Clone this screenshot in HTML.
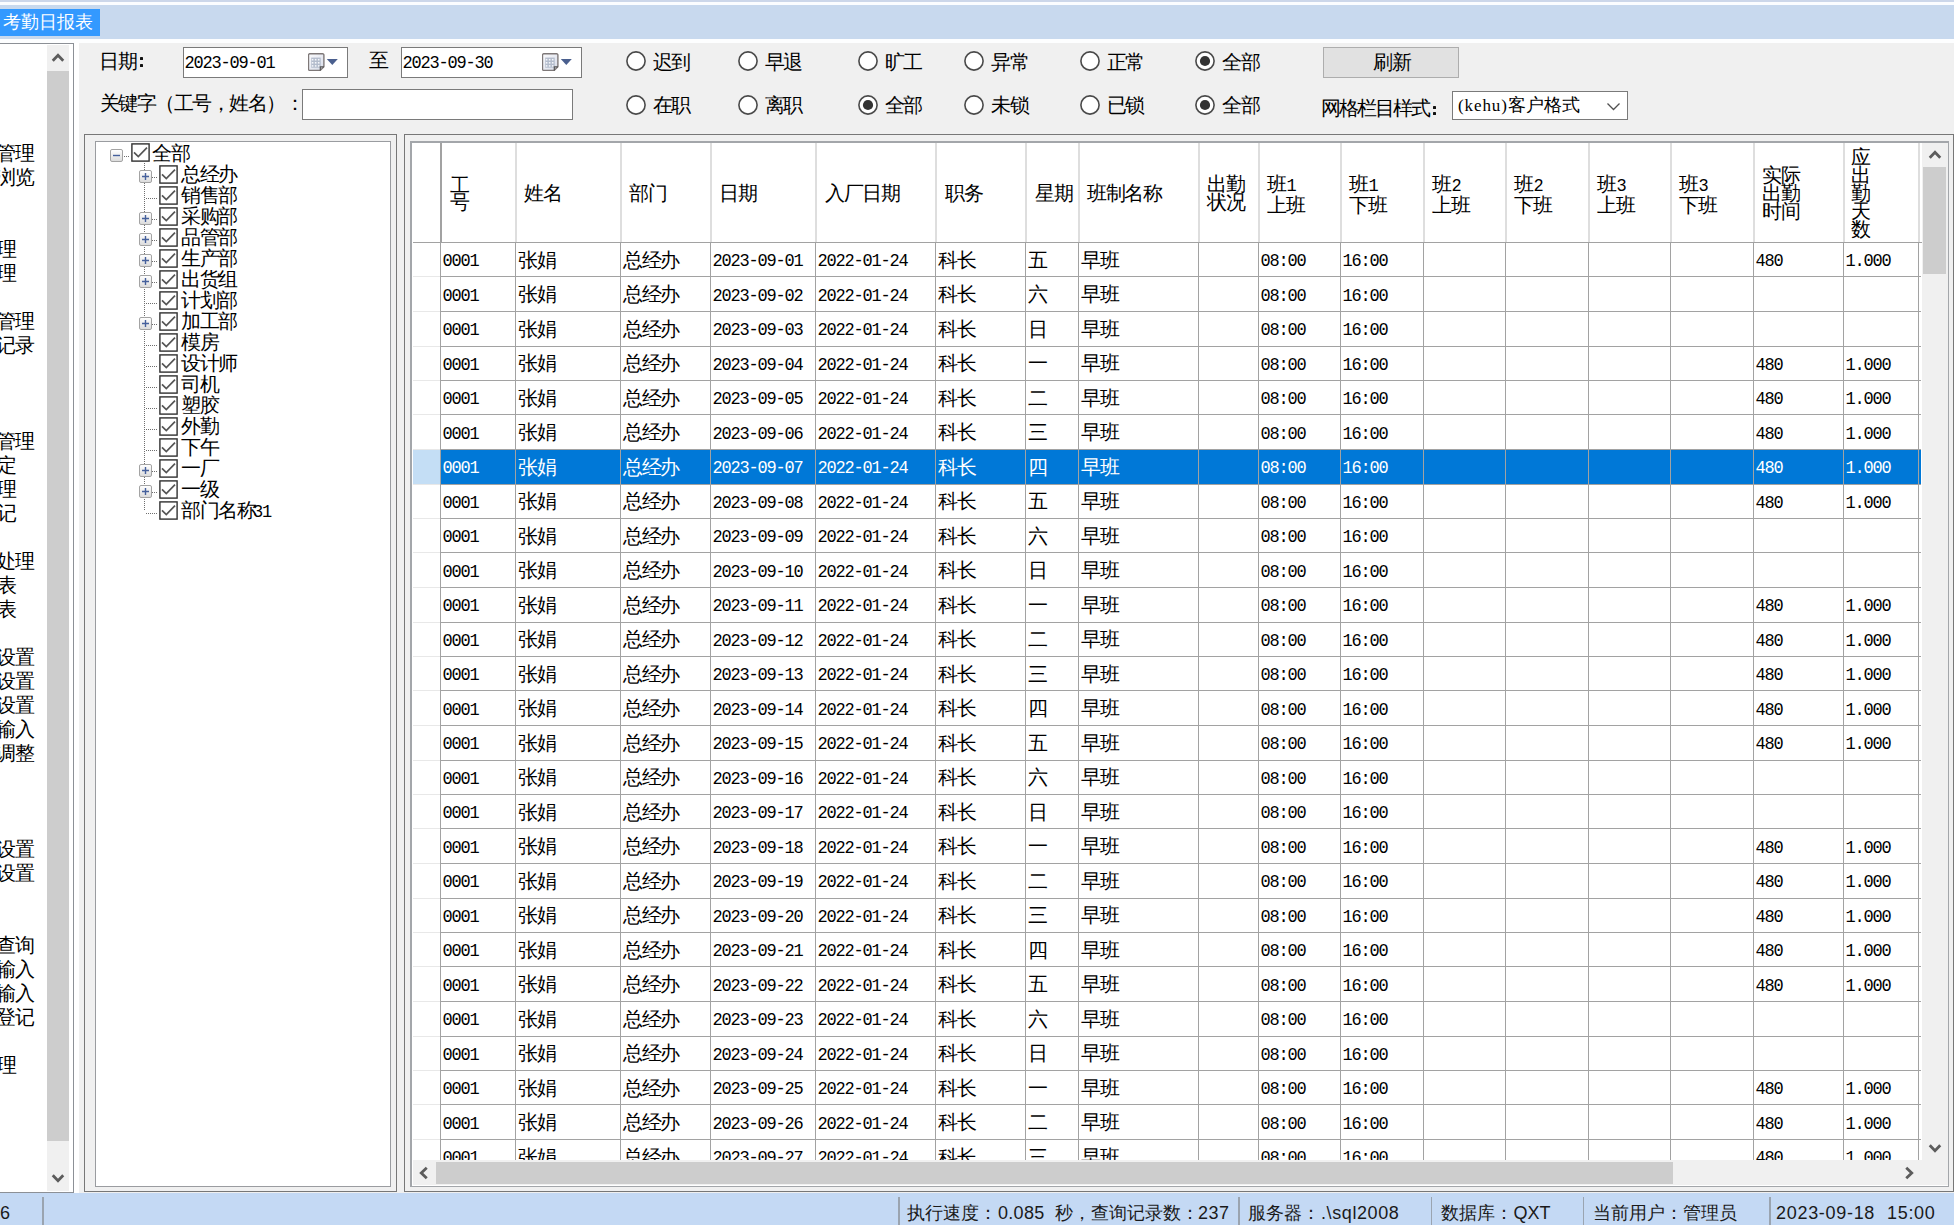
<!DOCTYPE html><html><head><meta charset="utf-8"><title>考勤日报表</title><style>
*{margin:0;padding:0;box-sizing:border-box}
html,body{width:1954px;height:1225px;overflow:hidden}
body{position:relative;background:#f0f0f0;font-family:"Liberation Sans",sans-serif;font-size:19.5px;letter-spacing:-1.5px;color:#000}
div,span{position:absolute;white-space:nowrap}
.t{line-height:20px;font-size:19.5px;letter-spacing:-1.5px}
.y{font-size:18px;letter-spacing:0}
.m{font-family:"Liberation Mono",monospace;font-size:17px;letter-spacing:-1.2px;transform:scaleY(1.1)}
.rad{width:20px;height:20px;border:1.7px solid #4a4a4a;border-radius:50%;background:#fff}
.rad.on::after{content:"";position:absolute;left:3.5px;top:3.5px;width:10px;height:10px;border-radius:50%;background:#333}
.cb{width:19px;height:19px;border:1.8px solid #303030;background:#fff}
.ex{width:13px;height:13px;border:1px solid #a3a3a3;border-radius:2px;background:linear-gradient(#fff,#dcdcdc)}
.dv{width:1px;background:repeating-linear-gradient(#6e6e6e 0 1px,transparent 1px 2px)}
.dh{height:1px;background:repeating-linear-gradient(90deg,#6e6e6e 0 1px,transparent 1px 2px)}
.vl{width:1.4px;background:#a2a2a2}
.hl{height:1.4px;background:#a2a2a2}
</style></head><body>
<div style="left:0;top:0;width:1954px;height:2px;background:#ccd7ea"></div>
<div style="left:0;top:2px;width:1954px;height:3px;background:#fbfdff"></div>
<div style="left:0;top:5px;width:1954px;height:34px;background:#c8d9ee"></div>
<div style="left:0;top:39px;width:1954px;height:4px;background:#fdfeff"></div>
<div style="left:0;top:9px;width:100px;height:27px;background:#3399ff"></div>
<div class="t y" style="left:3px;top:12px;color:#fff">考勤日报表</div>
<div style="left:0;top:43px;width:74px;height:1150px;background:#fff;border:1.5px solid #8c9096;border-left:0"></div>
<div style="left:74px;top:43px;width:5px;height:1150px;background:#fff"></div>
<div style="left:47px;top:44.5px;width:22px;height:1146px;background:#f0f0f0"></div>
<div style="left:47px;top:71px;width:22px;height:1070px;background:#cdcdcd"></div>
<svg style="position:absolute;left:47.5px;top:48px" width="20" height="20" viewBox="-10 -10 20 20"><polyline points="-5.25,2.75 0,-2.75 5.25,2.75" fill="none" stroke="#5c5c5c" stroke-width="2.8" stroke-linejoin="miter"/></svg>
<svg style="position:absolute;left:47.5px;top:1167.5px" width="20" height="20" viewBox="-10 -10 20 20"><polyline points="-5.25,-2.75 0,2.75 5.25,-2.75" fill="none" stroke="#5c5c5c" stroke-width="2.8" stroke-linejoin="miter"/></svg>
<div style="left:0;top:44px;width:46px;height:1146px;overflow:hidden">
<span class="t" style="right:13px;top:99px">考勤管理</span>
<span class="t" style="right:13px;top:123px">考勤浏览</span>
<span class="t" style="right:31px;top:195px">考勤理</span>
<span class="t" style="right:31px;top:219px">考勤理</span>
<span class="t" style="right:13px;top:267px">考勤管理</span>
<span class="t" style="right:13px;top:291px">考勤记录</span>
<span class="t" style="right:13px;top:387px">考勤管理</span>
<span class="t" style="right:31px;top:411px">考勤定</span>
<span class="t" style="right:31px;top:435px">考勤理</span>
<span class="t" style="right:31px;top:459px">考勤记</span>
<span class="t" style="right:13px;top:507px">考勤处理</span>
<span class="t" style="right:31px;top:531px">考勤表</span>
<span class="t" style="right:31px;top:555px">考勤表</span>
<span class="t" style="right:13px;top:603px">考勤设置</span>
<span class="t" style="right:13px;top:627px">考勤设置</span>
<span class="t" style="right:13px;top:651px">考勤设置</span>
<span class="t" style="right:13px;top:675px">考勤输入</span>
<span class="t" style="right:13px;top:699px">考勤调整</span>
<span class="t" style="right:13px;top:795px">考勤设置</span>
<span class="t" style="right:13px;top:819px">考勤设置</span>
<span class="t" style="right:13px;top:891px">考勤查询</span>
<span class="t" style="right:13px;top:915px">考勤输入</span>
<span class="t" style="right:13px;top:939px">考勤输入</span>
<span class="t" style="right:13px;top:963px">考勤登记</span>
<span class="t" style="right:31px;top:1011px">考勤理</span>
</div>
<div class="t" style="left:99px;top:51px;">日期</div>
<div style="left:140px;top:57px;width:3.2px;height:3.2px;background:#111;border-radius:0.6px"></div>
<div style="left:140px;top:64px;width:3.2px;height:3.2px;background:#111;border-radius:0.6px"></div>
<div style="left:183px;top:47px;width:165px;height:31px;background:#fff;border:1px solid #7a7a7a"></div>
<div class="t m" style="left:184.5px;top:54.0px">2023-09-01</div>
<svg style="position:absolute;left:308px;top:52px" width="18" height="20" viewBox="0 0 18 20"><defs><linearGradient id="cg" x1="0" y1="0" x2="1" y2="1"><stop offset="0" stop-color="#fbfbfd"/><stop offset="1" stop-color="#d6dbe8"/></linearGradient></defs><path d="M1.7,1.8 h13 a1.2,1.2 0 0 1 1.2,1.2 v11.8 l-3.6,3.6 h-10.6 a1.2,1.2 0 0 1 -1.2,-1.2 v-14.2 a1.2,1.2 0 0 1 1.2,-1.2z" fill="url(#cg)" stroke="#7e7878" stroke-width="1.4"/><rect x="3.2" y="5.6" width="9.5" height="10.1" fill="#b3bccc"/><rect x="3.8" y="6.9" width="1.6" height="1.6" fill="#f4f6fa"/><rect x="3.8" y="10.0" width="1.6" height="1.6" fill="#f4f6fa"/><rect x="3.8" y="13.1" width="1.6" height="1.6" fill="#f4f6fa"/><rect x="6.85" y="6.9" width="1.6" height="1.6" fill="#f4f6fa"/><rect x="6.85" y="10.0" width="1.6" height="1.6" fill="#f4f6fa"/><rect x="6.85" y="13.1" width="1.6" height="1.6" fill="#f4f6fa"/><rect x="9.899999999999999" y="6.9" width="1.6" height="1.6" fill="#f4f6fa"/><rect x="9.899999999999999" y="10.0" width="1.6" height="1.6" fill="#f4f6fa"/><rect x="9.899999999999999" y="13.1" width="1.6" height="1.6" fill="#f4f6fa"/><path d="M12.3,18.4 v-3.6 h3.6" fill="none" stroke="#555" stroke-width="1.2"/></svg>
<svg style="position:absolute;left:326px;top:58px" width="13" height="8"><polygon points="0.8,1 11.8,1 6.3,7" fill="#4a5f8e"/></svg>
<div class="t" style="left:369px;top:50px;">至</div>
<div style="left:401px;top:47px;width:181px;height:31px;background:#fff;border:1px solid #7a7a7a"></div>
<div class="t m" style="left:402.5px;top:54.0px">2023-09-30</div>
<svg style="position:absolute;left:542px;top:52px" width="18" height="20" viewBox="0 0 18 20"><defs><linearGradient id="cg" x1="0" y1="0" x2="1" y2="1"><stop offset="0" stop-color="#fbfbfd"/><stop offset="1" stop-color="#d6dbe8"/></linearGradient></defs><path d="M1.7,1.8 h13 a1.2,1.2 0 0 1 1.2,1.2 v11.8 l-3.6,3.6 h-10.6 a1.2,1.2 0 0 1 -1.2,-1.2 v-14.2 a1.2,1.2 0 0 1 1.2,-1.2z" fill="url(#cg)" stroke="#7e7878" stroke-width="1.4"/><rect x="3.2" y="5.6" width="9.5" height="10.1" fill="#b3bccc"/><rect x="3.8" y="6.9" width="1.6" height="1.6" fill="#f4f6fa"/><rect x="3.8" y="10.0" width="1.6" height="1.6" fill="#f4f6fa"/><rect x="3.8" y="13.1" width="1.6" height="1.6" fill="#f4f6fa"/><rect x="6.85" y="6.9" width="1.6" height="1.6" fill="#f4f6fa"/><rect x="6.85" y="10.0" width="1.6" height="1.6" fill="#f4f6fa"/><rect x="6.85" y="13.1" width="1.6" height="1.6" fill="#f4f6fa"/><rect x="9.899999999999999" y="6.9" width="1.6" height="1.6" fill="#f4f6fa"/><rect x="9.899999999999999" y="10.0" width="1.6" height="1.6" fill="#f4f6fa"/><rect x="9.899999999999999" y="13.1" width="1.6" height="1.6" fill="#f4f6fa"/><path d="M12.3,18.4 v-3.6 h3.6" fill="none" stroke="#555" stroke-width="1.2"/></svg>
<svg style="position:absolute;left:560px;top:58px" width="13" height="8"><polygon points="0.8,1 11.8,1 6.3,7" fill="#4a5f8e"/></svg>
<div class="t" style="left:99.5px;top:92.5px;">关键字（工号，姓名）：</div>
<div style="left:302px;top:89px;width:271px;height:31px;background:#fff;border:1px solid #7a7a7a"></div>
<svg style="position:absolute;left:625.5px;top:51px" width="20" height="20"><circle cx="10" cy="10" r="9.1" fill="#fff" stroke="#4a4a4a" stroke-width="1.6"/></svg>
<div class="t" style="left:652.5px;top:52px;">迟到</div>
<svg style="position:absolute;left:625.5px;top:95px" width="20" height="20"><circle cx="10" cy="10" r="9.1" fill="#fff" stroke="#4a4a4a" stroke-width="1.6"/></svg>
<div class="t" style="left:652.5px;top:95px;">在职</div>
<svg style="position:absolute;left:737.7px;top:51px" width="20" height="20"><circle cx="10" cy="10" r="9.1" fill="#fff" stroke="#4a4a4a" stroke-width="1.6"/></svg>
<div class="t" style="left:764.7px;top:52px;">早退</div>
<svg style="position:absolute;left:737.7px;top:95px" width="20" height="20"><circle cx="10" cy="10" r="9.1" fill="#fff" stroke="#4a4a4a" stroke-width="1.6"/></svg>
<div class="t" style="left:764.7px;top:95px;">离职</div>
<svg style="position:absolute;left:857.6px;top:51px" width="20" height="20"><circle cx="10" cy="10" r="9.1" fill="#fff" stroke="#4a4a4a" stroke-width="1.6"/></svg>
<div class="t" style="left:884.6px;top:52px;">旷工</div>
<svg style="position:absolute;left:857.6px;top:95px" width="20" height="20"><circle cx="10" cy="10" r="9.1" fill="#fff" stroke="#4a4a4a" stroke-width="1.6"/><circle cx="10" cy="10" r="5.1" fill="#333"/></svg>
<div class="t" style="left:884.6px;top:95px;">全部</div>
<svg style="position:absolute;left:964.3px;top:51px" width="20" height="20"><circle cx="10" cy="10" r="9.1" fill="#fff" stroke="#4a4a4a" stroke-width="1.6"/></svg>
<div class="t" style="left:991.3px;top:52px;">异常</div>
<svg style="position:absolute;left:964.3px;top:95px" width="20" height="20"><circle cx="10" cy="10" r="9.1" fill="#fff" stroke="#4a4a4a" stroke-width="1.6"/></svg>
<div class="t" style="left:991.3px;top:95px;">未锁</div>
<svg style="position:absolute;left:1079.9px;top:51px" width="20" height="20"><circle cx="10" cy="10" r="9.1" fill="#fff" stroke="#4a4a4a" stroke-width="1.6"/></svg>
<div class="t" style="left:1106.9px;top:52px;">正常</div>
<svg style="position:absolute;left:1079.9px;top:95px" width="20" height="20"><circle cx="10" cy="10" r="9.1" fill="#fff" stroke="#4a4a4a" stroke-width="1.6"/></svg>
<div class="t" style="left:1106.9px;top:95px;">已锁</div>
<svg style="position:absolute;left:1195.4px;top:51px" width="20" height="20"><circle cx="10" cy="10" r="9.1" fill="#fff" stroke="#4a4a4a" stroke-width="1.6"/><circle cx="10" cy="10" r="5.1" fill="#333"/></svg>
<div class="t" style="left:1222.4px;top:52px;">全部</div>
<svg style="position:absolute;left:1195.4px;top:95px" width="20" height="20"><circle cx="10" cy="10" r="9.1" fill="#fff" stroke="#4a4a4a" stroke-width="1.6"/><circle cx="10" cy="10" r="5.1" fill="#333"/></svg>
<div class="t" style="left:1222.4px;top:95px;">全部</div>
<div style="left:1323px;top:47px;width:136px;height:31px;background:#e1e1e1;border:1px solid #adadad"></div>
<div class="t" style="left:1373px;top:52px;">刷新</div>
<div class="t" style="left:1320.5px;top:97.5px;letter-spacing:-1.9px">网格栏目样式</div>
<div style="left:1432.5px;top:106px;width:3.2px;height:3.2px;background:#111;border-radius:0.6px"></div>
<div style="left:1432.5px;top:112px;width:3.2px;height:3.2px;background:#111;border-radius:0.6px"></div>
<div style="left:1452px;top:91px;width:176px;height:29px;background:#fff;border:1px solid #7a7a7a"></div>
<div class="t" style="left:1458px;top:95px;font-family:'Liberation Serif',serif;font-size:17px;letter-spacing:0.9px">(kehu)<span style="position:static;font-family:'Liberation Sans',sans-serif;font-size:18px;letter-spacing:0">客户格式</span></div>
<svg style="position:absolute;left:1606px;top:102px" width="16" height="10"><polyline points="1.5,1.5 7.5,7.5 13.5,1.5" fill="none" stroke="#505050" stroke-width="1.3"/></svg>
<div style="left:84px;top:134px;width:313px;height:1058px;border:1.5px solid #777"></div>
<div style="left:95px;top:141px;width:296px;height:1046px;background:#fff;border:1.5px solid #9a9ca0"></div>
<div class="ex" style="left:110px;top:149px"></div>
<svg style="position:absolute;left:110px;top:149px" width="13" height="13"><path d="M3,6.5 h7" stroke="#45609c" stroke-width="1.4"/></svg>
<div class="dh" style="left:124px;top:155.5px;width:6px"></div>
<svg style="position:absolute;left:131px;top:143px" width="19" height="19"><rect x="0.9" y="0.9" width="17.2" height="17.2" fill="#fff" stroke="#303030" stroke-width="1.4"/><polyline points="3,9.3 7.3,13.6 16,4.6" fill="none" stroke="#555" stroke-width="1.7"/></svg>
<div class="t" style="left:152px;top:143px;line-height:20px">全部</div>
<div class="dv" style="left:144px;top:163px;height:346.6px"></div>
<div class="ex" style="left:138.5px;top:170.1px"></div>
<svg style="position:absolute;left:138.5px;top:170.1px" width="13" height="13"><path d="M3,6.5 h7 M6.5,3 v7" stroke="#45609c" stroke-width="1.4"/></svg>
<div class="dh" style="left:152px;top:176.6px;width:6px"></div>
<svg style="position:absolute;left:158.8px;top:164.6px" width="19" height="19"><rect x="0.9" y="0.9" width="17.2" height="17.2" fill="#fff" stroke="#303030" stroke-width="1.4"/><polyline points="3,9.3 7.3,13.6 16,4.6" fill="none" stroke="#555" stroke-width="1.7"/></svg>
<div class="t" style="left:181px;top:164.1px">总经办</div>
<div class="dh" style="left:146px;top:197.6px;width:12px"></div>
<svg style="position:absolute;left:158.8px;top:185.6px" width="19" height="19"><rect x="0.9" y="0.9" width="17.2" height="17.2" fill="#fff" stroke="#303030" stroke-width="1.4"/><polyline points="3,9.3 7.3,13.6 16,4.6" fill="none" stroke="#555" stroke-width="1.7"/></svg>
<div class="t" style="left:181px;top:185.1px">销售部</div>
<div class="ex" style="left:138.5px;top:212.1px"></div>
<svg style="position:absolute;left:138.5px;top:212.1px" width="13" height="13"><path d="M3,6.5 h7 M6.5,3 v7" stroke="#45609c" stroke-width="1.4"/></svg>
<div class="dh" style="left:152px;top:218.6px;width:6px"></div>
<svg style="position:absolute;left:158.8px;top:206.6px" width="19" height="19"><rect x="0.9" y="0.9" width="17.2" height="17.2" fill="#fff" stroke="#303030" stroke-width="1.4"/><polyline points="3,9.3 7.3,13.6 16,4.6" fill="none" stroke="#555" stroke-width="1.7"/></svg>
<div class="t" style="left:181px;top:206.1px">采购部</div>
<div class="ex" style="left:138.5px;top:233.1px"></div>
<svg style="position:absolute;left:138.5px;top:233.1px" width="13" height="13"><path d="M3,6.5 h7 M6.5,3 v7" stroke="#45609c" stroke-width="1.4"/></svg>
<div class="dh" style="left:152px;top:239.6px;width:6px"></div>
<svg style="position:absolute;left:158.8px;top:227.6px" width="19" height="19"><rect x="0.9" y="0.9" width="17.2" height="17.2" fill="#fff" stroke="#303030" stroke-width="1.4"/><polyline points="3,9.3 7.3,13.6 16,4.6" fill="none" stroke="#555" stroke-width="1.7"/></svg>
<div class="t" style="left:181px;top:227.1px">品管部</div>
<div class="ex" style="left:138.5px;top:254.1px"></div>
<svg style="position:absolute;left:138.5px;top:254.1px" width="13" height="13"><path d="M3,6.5 h7 M6.5,3 v7" stroke="#45609c" stroke-width="1.4"/></svg>
<div class="dh" style="left:152px;top:260.6px;width:6px"></div>
<svg style="position:absolute;left:158.8px;top:248.6px" width="19" height="19"><rect x="0.9" y="0.9" width="17.2" height="17.2" fill="#fff" stroke="#303030" stroke-width="1.4"/><polyline points="3,9.3 7.3,13.6 16,4.6" fill="none" stroke="#555" stroke-width="1.7"/></svg>
<div class="t" style="left:181px;top:248.1px">生产部</div>
<div class="ex" style="left:138.5px;top:275.1px"></div>
<svg style="position:absolute;left:138.5px;top:275.1px" width="13" height="13"><path d="M3,6.5 h7 M6.5,3 v7" stroke="#45609c" stroke-width="1.4"/></svg>
<div class="dh" style="left:152px;top:281.6px;width:6px"></div>
<svg style="position:absolute;left:158.8px;top:269.6px" width="19" height="19"><rect x="0.9" y="0.9" width="17.2" height="17.2" fill="#fff" stroke="#303030" stroke-width="1.4"/><polyline points="3,9.3 7.3,13.6 16,4.6" fill="none" stroke="#555" stroke-width="1.7"/></svg>
<div class="t" style="left:181px;top:269.1px">出货组</div>
<div class="dh" style="left:146px;top:302.6px;width:12px"></div>
<svg style="position:absolute;left:158.8px;top:290.6px" width="19" height="19"><rect x="0.9" y="0.9" width="17.2" height="17.2" fill="#fff" stroke="#303030" stroke-width="1.4"/><polyline points="3,9.3 7.3,13.6 16,4.6" fill="none" stroke="#555" stroke-width="1.7"/></svg>
<div class="t" style="left:181px;top:290.1px">计划部</div>
<div class="ex" style="left:138.5px;top:317.1px"></div>
<svg style="position:absolute;left:138.5px;top:317.1px" width="13" height="13"><path d="M3,6.5 h7 M6.5,3 v7" stroke="#45609c" stroke-width="1.4"/></svg>
<div class="dh" style="left:152px;top:323.6px;width:6px"></div>
<svg style="position:absolute;left:158.8px;top:311.6px" width="19" height="19"><rect x="0.9" y="0.9" width="17.2" height="17.2" fill="#fff" stroke="#303030" stroke-width="1.4"/><polyline points="3,9.3 7.3,13.6 16,4.6" fill="none" stroke="#555" stroke-width="1.7"/></svg>
<div class="t" style="left:181px;top:311.1px">加工部</div>
<div class="dh" style="left:146px;top:344.6px;width:12px"></div>
<svg style="position:absolute;left:158.8px;top:332.6px" width="19" height="19"><rect x="0.9" y="0.9" width="17.2" height="17.2" fill="#fff" stroke="#303030" stroke-width="1.4"/><polyline points="3,9.3 7.3,13.6 16,4.6" fill="none" stroke="#555" stroke-width="1.7"/></svg>
<div class="t" style="left:181px;top:332.1px">模房</div>
<div class="dh" style="left:146px;top:365.6px;width:12px"></div>
<svg style="position:absolute;left:158.8px;top:353.6px" width="19" height="19"><rect x="0.9" y="0.9" width="17.2" height="17.2" fill="#fff" stroke="#303030" stroke-width="1.4"/><polyline points="3,9.3 7.3,13.6 16,4.6" fill="none" stroke="#555" stroke-width="1.7"/></svg>
<div class="t" style="left:181px;top:353.1px">设计师</div>
<div class="dh" style="left:146px;top:386.6px;width:12px"></div>
<svg style="position:absolute;left:158.8px;top:374.6px" width="19" height="19"><rect x="0.9" y="0.9" width="17.2" height="17.2" fill="#fff" stroke="#303030" stroke-width="1.4"/><polyline points="3,9.3 7.3,13.6 16,4.6" fill="none" stroke="#555" stroke-width="1.7"/></svg>
<div class="t" style="left:181px;top:374.1px">司机</div>
<div class="dh" style="left:146px;top:407.6px;width:12px"></div>
<svg style="position:absolute;left:158.8px;top:395.6px" width="19" height="19"><rect x="0.9" y="0.9" width="17.2" height="17.2" fill="#fff" stroke="#303030" stroke-width="1.4"/><polyline points="3,9.3 7.3,13.6 16,4.6" fill="none" stroke="#555" stroke-width="1.7"/></svg>
<div class="t" style="left:181px;top:395.1px">塑胶</div>
<div class="dh" style="left:146px;top:428.6px;width:12px"></div>
<svg style="position:absolute;left:158.8px;top:416.6px" width="19" height="19"><rect x="0.9" y="0.9" width="17.2" height="17.2" fill="#fff" stroke="#303030" stroke-width="1.4"/><polyline points="3,9.3 7.3,13.6 16,4.6" fill="none" stroke="#555" stroke-width="1.7"/></svg>
<div class="t" style="left:181px;top:416.1px">外勤</div>
<div class="dh" style="left:146px;top:449.6px;width:12px"></div>
<svg style="position:absolute;left:158.8px;top:437.6px" width="19" height="19"><rect x="0.9" y="0.9" width="17.2" height="17.2" fill="#fff" stroke="#303030" stroke-width="1.4"/><polyline points="3,9.3 7.3,13.6 16,4.6" fill="none" stroke="#555" stroke-width="1.7"/></svg>
<div class="t" style="left:181px;top:437.1px">下午</div>
<div class="ex" style="left:138.5px;top:464.1px"></div>
<svg style="position:absolute;left:138.5px;top:464.1px" width="13" height="13"><path d="M3,6.5 h7 M6.5,3 v7" stroke="#45609c" stroke-width="1.4"/></svg>
<div class="dh" style="left:152px;top:470.6px;width:6px"></div>
<svg style="position:absolute;left:158.8px;top:458.6px" width="19" height="19"><rect x="0.9" y="0.9" width="17.2" height="17.2" fill="#fff" stroke="#303030" stroke-width="1.4"/><polyline points="3,9.3 7.3,13.6 16,4.6" fill="none" stroke="#555" stroke-width="1.7"/></svg>
<div class="t" style="left:181px;top:458.1px">一厂</div>
<div class="ex" style="left:138.5px;top:485.1px"></div>
<svg style="position:absolute;left:138.5px;top:485.1px" width="13" height="13"><path d="M3,6.5 h7 M6.5,3 v7" stroke="#45609c" stroke-width="1.4"/></svg>
<div class="dh" style="left:152px;top:491.6px;width:6px"></div>
<svg style="position:absolute;left:158.8px;top:479.6px" width="19" height="19"><rect x="0.9" y="0.9" width="17.2" height="17.2" fill="#fff" stroke="#303030" stroke-width="1.4"/><polyline points="3,9.3 7.3,13.6 16,4.6" fill="none" stroke="#555" stroke-width="1.7"/></svg>
<div class="t" style="left:181px;top:479.1px">一级</div>
<div class="dh" style="left:146px;top:512.6px;width:12px"></div>
<svg style="position:absolute;left:158.8px;top:500.6px" width="19" height="19"><rect x="0.9" y="0.9" width="17.2" height="17.2" fill="#fff" stroke="#303030" stroke-width="1.4"/><polyline points="3,9.3 7.3,13.6 16,4.6" fill="none" stroke="#555" stroke-width="1.7"/></svg>
<div class="t" style="left:181px;top:500.1px">部门名称<span style="position:static;display:inline-block;font-family:Liberation Mono,monospace;font-size:17px;letter-spacing:-1.2px;transform:scaleY(1.1);margin-left:-2px">31</span></div>
<div style="left:403.5px;top:134px;width:1550px;height:1058px;border:1.5px solid #777;background:#f0f0f0"></div>
<div style="left:410px;top:140.5px;width:1538.5px;height:1046.5px;border:2px solid #a3a6aa;border-right-width:1.5px;border-bottom-width:1.5px;background:#fff"></div>
<div style="left:412.5px;top:143px;width:1509px;height:1017px;overflow:hidden;background:#fff">
<div class="vl" style="left:27.3px;top:0;height:99px;background:#a2a2a2;width:1.8px"></div>
<div class="vl" style="left:102.3px;top:0;height:99px;background:#dedede;width:1.8px"></div>
<div class="vl" style="left:207.3px;top:0;height:99px;background:#dedede;width:1.8px"></div>
<div class="vl" style="left:297.3px;top:0;height:99px;background:#dedede;width:1.8px"></div>
<div class="vl" style="left:402.3px;top:0;height:99px;background:#dedede;width:1.8px"></div>
<div class="vl" style="left:522.3px;top:0;height:99px;background:#dedede;width:1.8px"></div>
<div class="vl" style="left:612.3px;top:0;height:99px;background:#dedede;width:1.8px"></div>
<div class="vl" style="left:665.3px;top:0;height:99px;background:#dedede;width:1.8px"></div>
<div class="vl" style="left:785.3px;top:0;height:99px;background:#dedede;width:1.8px"></div>
<div class="vl" style="left:845.3px;top:0;height:99px;background:#dedede;width:1.8px"></div>
<div class="vl" style="left:927.3px;top:0;height:99px;background:#dedede;width:1.8px"></div>
<div class="vl" style="left:1010.3px;top:0;height:99px;background:#dedede;width:1.8px"></div>
<div class="vl" style="left:1092.3px;top:0;height:99px;background:#dedede;width:1.8px"></div>
<div class="vl" style="left:1175.3px;top:0;height:99px;background:#dedede;width:1.8px"></div>
<div class="vl" style="left:1257.3px;top:0;height:99px;background:#dedede;width:1.8px"></div>
<div class="vl" style="left:1340.3px;top:0;height:99px;background:#dedede;width:1.8px"></div>
<div class="vl" style="left:1430.3px;top:0;height:99px;background:#dedede;width:1.8px"></div>
<div class="vl" style="left:1505.3px;top:0;height:99px;background:#dedede;width:1.8px"></div>
<div class="hl" style="left:0;top:99px;width:1509px"></div>
<div style="left:37.5px;top:33.5px;line-height:17px">工<br>号</div>
<div style="left:111.5px;top:40.0px;line-height:20px">姓名</div>
<div style="left:216.5px;top:40.0px;line-height:20px">部门</div>
<div style="left:306.5px;top:40.0px;line-height:20px">日期</div>
<div style="left:412.5px;top:40.0px;line-height:20px">入厂日期</div>
<div style="left:532.5px;top:40.0px;line-height:20px">职务</div>
<div style="left:622.5px;top:40.0px;line-height:20px">星期</div>
<div style="left:674.5px;top:40.0px;line-height:20px">班制名称</div>
<div style="left:794.5px;top:31.5px;line-height:18px">出勤<br>状况</div>
<div style="left:854.5px;top:31.5px;line-height:18.5px">班<span style="position:static;display:inline-block;font-family:'Liberation Mono',monospace;font-size:17px;letter-spacing:0;margin-left:1px;transform:scaleY(1.1)">1</span><br>上班</div>
<div style="left:936.5px;top:31.5px;line-height:18.5px">班<span style="position:static;display:inline-block;font-family:'Liberation Mono',monospace;font-size:17px;letter-spacing:0;margin-left:1px;transform:scaleY(1.1)">1</span><br>下班</div>
<div style="left:1019.5px;top:31.5px;line-height:18.5px">班<span style="position:static;display:inline-block;font-family:'Liberation Mono',monospace;font-size:17px;letter-spacing:0;margin-left:1px;transform:scaleY(1.1)">2</span><br>上班</div>
<div style="left:1101.5px;top:31.5px;line-height:18.5px">班<span style="position:static;display:inline-block;font-family:'Liberation Mono',monospace;font-size:17px;letter-spacing:0;margin-left:1px;transform:scaleY(1.1)">2</span><br>下班</div>
<div style="left:1184.5px;top:31.5px;line-height:18.5px">班<span style="position:static;display:inline-block;font-family:'Liberation Mono',monospace;font-size:17px;letter-spacing:0;margin-left:1px;transform:scaleY(1.1)">3</span><br>上班</div>
<div style="left:1266.5px;top:31.5px;line-height:18.5px">班<span style="position:static;display:inline-block;font-family:'Liberation Mono',monospace;font-size:17px;letter-spacing:0;margin-left:1px;transform:scaleY(1.1)">3</span><br>下班</div>
<div style="left:1349.5px;top:23.0px;line-height:18px">实际<br>出勤<br>时间</div>
<div style="left:1438.5px;top:5.0px;line-height:18px">应<br>出<br>勤<br>天<br>数</div>
<div class="hl" style="left:27.5px;top:133px;width:1481px"></div>
<div class="hl" style="left:0;top:133px;width:27.5px;background:#e8e8e8"></div>
<div class="t m" style="left:30.0px;top:109.05000000000001px;color:#000">0001</div>
<div class="t" style="left:105.5px;top:106.75px;color:#000">张娟</div>
<div class="t" style="left:210.5px;top:106.75px;color:#000">总经办</div>
<div class="t m" style="left:300.0px;top:109.05000000000001px;color:#000">2023-09-01</div>
<div class="t m" style="left:405.0px;top:109.05000000000001px;color:#000">2022-01-24</div>
<div class="t" style="left:525.5px;top:106.75px;color:#000">科长</div>
<div class="t" style="left:615.5px;top:106.75px;color:#000">五</div>
<div class="t" style="left:668.5px;top:106.75px;color:#000">早班</div>
<div class="t m" style="left:848.0px;top:109.05000000000001px;color:#000">08:00</div>
<div class="t m" style="left:930.0px;top:109.05000000000001px;color:#000">16:00</div>
<div class="t m" style="left:1343.0px;top:109.05000000000001px;color:#000">480</div>
<div class="t m" style="left:1433.0px;top:109.05000000000001px;color:#000">1.000</div>
<div class="hl" style="left:27.5px;top:168px;width:1481px"></div>
<div class="hl" style="left:0;top:168px;width:27.5px;background:#e8e8e8"></div>
<div class="t m" style="left:30.0px;top:143.55px;color:#000">0001</div>
<div class="t" style="left:105.5px;top:141.25px;color:#000">张娟</div>
<div class="t" style="left:210.5px;top:141.25px;color:#000">总经办</div>
<div class="t m" style="left:300.0px;top:143.55px;color:#000">2023-09-02</div>
<div class="t m" style="left:405.0px;top:143.55px;color:#000">2022-01-24</div>
<div class="t" style="left:525.5px;top:141.25px;color:#000">科长</div>
<div class="t" style="left:615.5px;top:141.25px;color:#000">六</div>
<div class="t" style="left:668.5px;top:141.25px;color:#000">早班</div>
<div class="t m" style="left:848.0px;top:143.55px;color:#000">08:00</div>
<div class="t m" style="left:930.0px;top:143.55px;color:#000">16:00</div>
<div class="hl" style="left:27.5px;top:203px;width:1481px"></div>
<div class="hl" style="left:0;top:203px;width:27.5px;background:#e8e8e8"></div>
<div class="t m" style="left:30.0px;top:178.05px;color:#000">0001</div>
<div class="t" style="left:105.5px;top:175.75px;color:#000">张娟</div>
<div class="t" style="left:210.5px;top:175.75px;color:#000">总经办</div>
<div class="t m" style="left:300.0px;top:178.05px;color:#000">2023-09-03</div>
<div class="t m" style="left:405.0px;top:178.05px;color:#000">2022-01-24</div>
<div class="t" style="left:525.5px;top:175.75px;color:#000">科长</div>
<div class="t" style="left:615.5px;top:175.75px;color:#000">日</div>
<div class="t" style="left:668.5px;top:175.75px;color:#000">早班</div>
<div class="t m" style="left:848.0px;top:178.05px;color:#000">08:00</div>
<div class="t m" style="left:930.0px;top:178.05px;color:#000">16:00</div>
<div class="hl" style="left:27.5px;top:237px;width:1481px"></div>
<div class="hl" style="left:0;top:237px;width:27.5px;background:#e8e8e8"></div>
<div class="t m" style="left:30.0px;top:212.55px;color:#000">0001</div>
<div class="t" style="left:105.5px;top:210.25px;color:#000">张娟</div>
<div class="t" style="left:210.5px;top:210.25px;color:#000">总经办</div>
<div class="t m" style="left:300.0px;top:212.55px;color:#000">2023-09-04</div>
<div class="t m" style="left:405.0px;top:212.55px;color:#000">2022-01-24</div>
<div class="t" style="left:525.5px;top:210.25px;color:#000">科长</div>
<div class="t" style="left:615.5px;top:210.25px;color:#000">一</div>
<div class="t" style="left:668.5px;top:210.25px;color:#000">早班</div>
<div class="t m" style="left:848.0px;top:212.55px;color:#000">08:00</div>
<div class="t m" style="left:930.0px;top:212.55px;color:#000">16:00</div>
<div class="t m" style="left:1343.0px;top:212.55px;color:#000">480</div>
<div class="t m" style="left:1433.0px;top:212.55px;color:#000">1.000</div>
<div class="hl" style="left:27.5px;top:271px;width:1481px"></div>
<div class="hl" style="left:0;top:271px;width:27.5px;background:#e8e8e8"></div>
<div class="t m" style="left:30.0px;top:247.05px;color:#000">0001</div>
<div class="t" style="left:105.5px;top:244.75px;color:#000">张娟</div>
<div class="t" style="left:210.5px;top:244.75px;color:#000">总经办</div>
<div class="t m" style="left:300.0px;top:247.05px;color:#000">2023-09-05</div>
<div class="t m" style="left:405.0px;top:247.05px;color:#000">2022-01-24</div>
<div class="t" style="left:525.5px;top:244.75px;color:#000">科长</div>
<div class="t" style="left:615.5px;top:244.75px;color:#000">二</div>
<div class="t" style="left:668.5px;top:244.75px;color:#000">早班</div>
<div class="t m" style="left:848.0px;top:247.05px;color:#000">08:00</div>
<div class="t m" style="left:930.0px;top:247.05px;color:#000">16:00</div>
<div class="t m" style="left:1343.0px;top:247.05px;color:#000">480</div>
<div class="t m" style="left:1433.0px;top:247.05px;color:#000">1.000</div>
<div class="hl" style="left:27.5px;top:306px;width:1481px"></div>
<div class="hl" style="left:0;top:306px;width:27.5px;background:#e8e8e8"></div>
<div class="t m" style="left:30.0px;top:281.55px;color:#000">0001</div>
<div class="t" style="left:105.5px;top:279.25px;color:#000">张娟</div>
<div class="t" style="left:210.5px;top:279.25px;color:#000">总经办</div>
<div class="t m" style="left:300.0px;top:281.55px;color:#000">2023-09-06</div>
<div class="t m" style="left:405.0px;top:281.55px;color:#000">2022-01-24</div>
<div class="t" style="left:525.5px;top:279.25px;color:#000">科长</div>
<div class="t" style="left:615.5px;top:279.25px;color:#000">三</div>
<div class="t" style="left:668.5px;top:279.25px;color:#000">早班</div>
<div class="t m" style="left:848.0px;top:281.55px;color:#000">08:00</div>
<div class="t m" style="left:930.0px;top:281.55px;color:#000">16:00</div>
<div class="t m" style="left:1343.0px;top:281.55px;color:#000">480</div>
<div class="t m" style="left:1433.0px;top:281.55px;color:#000">1.000</div>
<div style="left:27.5px;top:306.5px;width:1481px;height:34.5px;background:#0078d7"></div>
<div style="left:0;top:306.5px;width:27.5px;height:34.5px;background:#c4def5"></div>
<div class="hl" style="left:27.5px;top:341px;width:1481px"></div>
<div class="hl" style="left:0;top:341px;width:27.5px;background:#e8e8e8"></div>
<div class="t m" style="left:30.0px;top:316.05px;color:#fff">0001</div>
<div class="t" style="left:105.5px;top:313.75px;color:#fff">张娟</div>
<div class="t" style="left:210.5px;top:313.75px;color:#fff">总经办</div>
<div class="t m" style="left:300.0px;top:316.05px;color:#fff">2023-09-07</div>
<div class="t m" style="left:405.0px;top:316.05px;color:#fff">2022-01-24</div>
<div class="t" style="left:525.5px;top:313.75px;color:#fff">科长</div>
<div class="t" style="left:615.5px;top:313.75px;color:#fff">四</div>
<div class="t" style="left:668.5px;top:313.75px;color:#fff">早班</div>
<div class="t m" style="left:848.0px;top:316.05px;color:#fff">08:00</div>
<div class="t m" style="left:930.0px;top:316.05px;color:#fff">16:00</div>
<div class="t m" style="left:1343.0px;top:316.05px;color:#fff">480</div>
<div class="t m" style="left:1433.0px;top:316.05px;color:#fff">1.000</div>
<div class="hl" style="left:27.5px;top:375px;width:1481px"></div>
<div class="hl" style="left:0;top:375px;width:27.5px;background:#e8e8e8"></div>
<div class="t m" style="left:30.0px;top:350.55px;color:#000">0001</div>
<div class="t" style="left:105.5px;top:348.25px;color:#000">张娟</div>
<div class="t" style="left:210.5px;top:348.25px;color:#000">总经办</div>
<div class="t m" style="left:300.0px;top:350.55px;color:#000">2023-09-08</div>
<div class="t m" style="left:405.0px;top:350.55px;color:#000">2022-01-24</div>
<div class="t" style="left:525.5px;top:348.25px;color:#000">科长</div>
<div class="t" style="left:615.5px;top:348.25px;color:#000">五</div>
<div class="t" style="left:668.5px;top:348.25px;color:#000">早班</div>
<div class="t m" style="left:848.0px;top:350.55px;color:#000">08:00</div>
<div class="t m" style="left:930.0px;top:350.55px;color:#000">16:00</div>
<div class="t m" style="left:1343.0px;top:350.55px;color:#000">480</div>
<div class="t m" style="left:1433.0px;top:350.55px;color:#000">1.000</div>
<div class="hl" style="left:27.5px;top:409px;width:1481px"></div>
<div class="hl" style="left:0;top:409px;width:27.5px;background:#e8e8e8"></div>
<div class="t m" style="left:30.0px;top:385.04999999999995px;color:#000">0001</div>
<div class="t" style="left:105.5px;top:382.75px;color:#000">张娟</div>
<div class="t" style="left:210.5px;top:382.75px;color:#000">总经办</div>
<div class="t m" style="left:300.0px;top:385.04999999999995px;color:#000">2023-09-09</div>
<div class="t m" style="left:405.0px;top:385.04999999999995px;color:#000">2022-01-24</div>
<div class="t" style="left:525.5px;top:382.75px;color:#000">科长</div>
<div class="t" style="left:615.5px;top:382.75px;color:#000">六</div>
<div class="t" style="left:668.5px;top:382.75px;color:#000">早班</div>
<div class="t m" style="left:848.0px;top:385.04999999999995px;color:#000">08:00</div>
<div class="t m" style="left:930.0px;top:385.04999999999995px;color:#000">16:00</div>
<div class="hl" style="left:27.5px;top:444px;width:1481px"></div>
<div class="hl" style="left:0;top:444px;width:27.5px;background:#e8e8e8"></div>
<div class="t m" style="left:30.0px;top:419.54999999999995px;color:#000">0001</div>
<div class="t" style="left:105.5px;top:417.25px;color:#000">张娟</div>
<div class="t" style="left:210.5px;top:417.25px;color:#000">总经办</div>
<div class="t m" style="left:300.0px;top:419.54999999999995px;color:#000">2023-09-10</div>
<div class="t m" style="left:405.0px;top:419.54999999999995px;color:#000">2022-01-24</div>
<div class="t" style="left:525.5px;top:417.25px;color:#000">科长</div>
<div class="t" style="left:615.5px;top:417.25px;color:#000">日</div>
<div class="t" style="left:668.5px;top:417.25px;color:#000">早班</div>
<div class="t m" style="left:848.0px;top:419.54999999999995px;color:#000">08:00</div>
<div class="t m" style="left:930.0px;top:419.54999999999995px;color:#000">16:00</div>
<div class="hl" style="left:27.5px;top:479px;width:1481px"></div>
<div class="hl" style="left:0;top:479px;width:27.5px;background:#e8e8e8"></div>
<div class="t m" style="left:30.0px;top:454.04999999999995px;color:#000">0001</div>
<div class="t" style="left:105.5px;top:451.75px;color:#000">张娟</div>
<div class="t" style="left:210.5px;top:451.75px;color:#000">总经办</div>
<div class="t m" style="left:300.0px;top:454.04999999999995px;color:#000">2023-09-11</div>
<div class="t m" style="left:405.0px;top:454.04999999999995px;color:#000">2022-01-24</div>
<div class="t" style="left:525.5px;top:451.75px;color:#000">科长</div>
<div class="t" style="left:615.5px;top:451.75px;color:#000">一</div>
<div class="t" style="left:668.5px;top:451.75px;color:#000">早班</div>
<div class="t m" style="left:848.0px;top:454.04999999999995px;color:#000">08:00</div>
<div class="t m" style="left:930.0px;top:454.04999999999995px;color:#000">16:00</div>
<div class="t m" style="left:1343.0px;top:454.04999999999995px;color:#000">480</div>
<div class="t m" style="left:1433.0px;top:454.04999999999995px;color:#000">1.000</div>
<div class="hl" style="left:27.5px;top:513px;width:1481px"></div>
<div class="hl" style="left:0;top:513px;width:27.5px;background:#e8e8e8"></div>
<div class="t m" style="left:30.0px;top:488.54999999999995px;color:#000">0001</div>
<div class="t" style="left:105.5px;top:486.25px;color:#000">张娟</div>
<div class="t" style="left:210.5px;top:486.25px;color:#000">总经办</div>
<div class="t m" style="left:300.0px;top:488.54999999999995px;color:#000">2023-09-12</div>
<div class="t m" style="left:405.0px;top:488.54999999999995px;color:#000">2022-01-24</div>
<div class="t" style="left:525.5px;top:486.25px;color:#000">科长</div>
<div class="t" style="left:615.5px;top:486.25px;color:#000">二</div>
<div class="t" style="left:668.5px;top:486.25px;color:#000">早班</div>
<div class="t m" style="left:848.0px;top:488.54999999999995px;color:#000">08:00</div>
<div class="t m" style="left:930.0px;top:488.54999999999995px;color:#000">16:00</div>
<div class="t m" style="left:1343.0px;top:488.54999999999995px;color:#000">480</div>
<div class="t m" style="left:1433.0px;top:488.54999999999995px;color:#000">1.000</div>
<div class="hl" style="left:27.5px;top:547px;width:1481px"></div>
<div class="hl" style="left:0;top:547px;width:27.5px;background:#e8e8e8"></div>
<div class="t m" style="left:30.0px;top:523.05px;color:#000">0001</div>
<div class="t" style="left:105.5px;top:520.75px;color:#000">张娟</div>
<div class="t" style="left:210.5px;top:520.75px;color:#000">总经办</div>
<div class="t m" style="left:300.0px;top:523.05px;color:#000">2023-09-13</div>
<div class="t m" style="left:405.0px;top:523.05px;color:#000">2022-01-24</div>
<div class="t" style="left:525.5px;top:520.75px;color:#000">科长</div>
<div class="t" style="left:615.5px;top:520.75px;color:#000">三</div>
<div class="t" style="left:668.5px;top:520.75px;color:#000">早班</div>
<div class="t m" style="left:848.0px;top:523.05px;color:#000">08:00</div>
<div class="t m" style="left:930.0px;top:523.05px;color:#000">16:00</div>
<div class="t m" style="left:1343.0px;top:523.05px;color:#000">480</div>
<div class="t m" style="left:1433.0px;top:523.05px;color:#000">1.000</div>
<div class="hl" style="left:27.5px;top:582px;width:1481px"></div>
<div class="hl" style="left:0;top:582px;width:27.5px;background:#e8e8e8"></div>
<div class="t m" style="left:30.0px;top:557.55px;color:#000">0001</div>
<div class="t" style="left:105.5px;top:555.25px;color:#000">张娟</div>
<div class="t" style="left:210.5px;top:555.25px;color:#000">总经办</div>
<div class="t m" style="left:300.0px;top:557.55px;color:#000">2023-09-14</div>
<div class="t m" style="left:405.0px;top:557.55px;color:#000">2022-01-24</div>
<div class="t" style="left:525.5px;top:555.25px;color:#000">科长</div>
<div class="t" style="left:615.5px;top:555.25px;color:#000">四</div>
<div class="t" style="left:668.5px;top:555.25px;color:#000">早班</div>
<div class="t m" style="left:848.0px;top:557.55px;color:#000">08:00</div>
<div class="t m" style="left:930.0px;top:557.55px;color:#000">16:00</div>
<div class="t m" style="left:1343.0px;top:557.55px;color:#000">480</div>
<div class="t m" style="left:1433.0px;top:557.55px;color:#000">1.000</div>
<div class="hl" style="left:27.5px;top:617px;width:1481px"></div>
<div class="hl" style="left:0;top:617px;width:27.5px;background:#e8e8e8"></div>
<div class="t m" style="left:30.0px;top:592.05px;color:#000">0001</div>
<div class="t" style="left:105.5px;top:589.75px;color:#000">张娟</div>
<div class="t" style="left:210.5px;top:589.75px;color:#000">总经办</div>
<div class="t m" style="left:300.0px;top:592.05px;color:#000">2023-09-15</div>
<div class="t m" style="left:405.0px;top:592.05px;color:#000">2022-01-24</div>
<div class="t" style="left:525.5px;top:589.75px;color:#000">科长</div>
<div class="t" style="left:615.5px;top:589.75px;color:#000">五</div>
<div class="t" style="left:668.5px;top:589.75px;color:#000">早班</div>
<div class="t m" style="left:848.0px;top:592.05px;color:#000">08:00</div>
<div class="t m" style="left:930.0px;top:592.05px;color:#000">16:00</div>
<div class="t m" style="left:1343.0px;top:592.05px;color:#000">480</div>
<div class="t m" style="left:1433.0px;top:592.05px;color:#000">1.000</div>
<div class="hl" style="left:27.5px;top:651px;width:1481px"></div>
<div class="hl" style="left:0;top:651px;width:27.5px;background:#e8e8e8"></div>
<div class="t m" style="left:30.0px;top:626.55px;color:#000">0001</div>
<div class="t" style="left:105.5px;top:624.25px;color:#000">张娟</div>
<div class="t" style="left:210.5px;top:624.25px;color:#000">总经办</div>
<div class="t m" style="left:300.0px;top:626.55px;color:#000">2023-09-16</div>
<div class="t m" style="left:405.0px;top:626.55px;color:#000">2022-01-24</div>
<div class="t" style="left:525.5px;top:624.25px;color:#000">科长</div>
<div class="t" style="left:615.5px;top:624.25px;color:#000">六</div>
<div class="t" style="left:668.5px;top:624.25px;color:#000">早班</div>
<div class="t m" style="left:848.0px;top:626.55px;color:#000">08:00</div>
<div class="t m" style="left:930.0px;top:626.55px;color:#000">16:00</div>
<div class="hl" style="left:27.5px;top:685px;width:1481px"></div>
<div class="hl" style="left:0;top:685px;width:27.5px;background:#e8e8e8"></div>
<div class="t m" style="left:30.0px;top:661.05px;color:#000">0001</div>
<div class="t" style="left:105.5px;top:658.75px;color:#000">张娟</div>
<div class="t" style="left:210.5px;top:658.75px;color:#000">总经办</div>
<div class="t m" style="left:300.0px;top:661.05px;color:#000">2023-09-17</div>
<div class="t m" style="left:405.0px;top:661.05px;color:#000">2022-01-24</div>
<div class="t" style="left:525.5px;top:658.75px;color:#000">科长</div>
<div class="t" style="left:615.5px;top:658.75px;color:#000">日</div>
<div class="t" style="left:668.5px;top:658.75px;color:#000">早班</div>
<div class="t m" style="left:848.0px;top:661.05px;color:#000">08:00</div>
<div class="t m" style="left:930.0px;top:661.05px;color:#000">16:00</div>
<div class="hl" style="left:27.5px;top:720px;width:1481px"></div>
<div class="hl" style="left:0;top:720px;width:27.5px;background:#e8e8e8"></div>
<div class="t m" style="left:30.0px;top:695.55px;color:#000">0001</div>
<div class="t" style="left:105.5px;top:693.25px;color:#000">张娟</div>
<div class="t" style="left:210.5px;top:693.25px;color:#000">总经办</div>
<div class="t m" style="left:300.0px;top:695.55px;color:#000">2023-09-18</div>
<div class="t m" style="left:405.0px;top:695.55px;color:#000">2022-01-24</div>
<div class="t" style="left:525.5px;top:693.25px;color:#000">科长</div>
<div class="t" style="left:615.5px;top:693.25px;color:#000">一</div>
<div class="t" style="left:668.5px;top:693.25px;color:#000">早班</div>
<div class="t m" style="left:848.0px;top:695.55px;color:#000">08:00</div>
<div class="t m" style="left:930.0px;top:695.55px;color:#000">16:00</div>
<div class="t m" style="left:1343.0px;top:695.55px;color:#000">480</div>
<div class="t m" style="left:1433.0px;top:695.55px;color:#000">1.000</div>
<div class="hl" style="left:27.5px;top:755px;width:1481px"></div>
<div class="hl" style="left:0;top:755px;width:27.5px;background:#e8e8e8"></div>
<div class="t m" style="left:30.0px;top:730.05px;color:#000">0001</div>
<div class="t" style="left:105.5px;top:727.75px;color:#000">张娟</div>
<div class="t" style="left:210.5px;top:727.75px;color:#000">总经办</div>
<div class="t m" style="left:300.0px;top:730.05px;color:#000">2023-09-19</div>
<div class="t m" style="left:405.0px;top:730.05px;color:#000">2022-01-24</div>
<div class="t" style="left:525.5px;top:727.75px;color:#000">科长</div>
<div class="t" style="left:615.5px;top:727.75px;color:#000">二</div>
<div class="t" style="left:668.5px;top:727.75px;color:#000">早班</div>
<div class="t m" style="left:848.0px;top:730.05px;color:#000">08:00</div>
<div class="t m" style="left:930.0px;top:730.05px;color:#000">16:00</div>
<div class="t m" style="left:1343.0px;top:730.05px;color:#000">480</div>
<div class="t m" style="left:1433.0px;top:730.05px;color:#000">1.000</div>
<div class="hl" style="left:27.5px;top:789px;width:1481px"></div>
<div class="hl" style="left:0;top:789px;width:27.5px;background:#e8e8e8"></div>
<div class="t m" style="left:30.0px;top:764.55px;color:#000">0001</div>
<div class="t" style="left:105.5px;top:762.25px;color:#000">张娟</div>
<div class="t" style="left:210.5px;top:762.25px;color:#000">总经办</div>
<div class="t m" style="left:300.0px;top:764.55px;color:#000">2023-09-20</div>
<div class="t m" style="left:405.0px;top:764.55px;color:#000">2022-01-24</div>
<div class="t" style="left:525.5px;top:762.25px;color:#000">科长</div>
<div class="t" style="left:615.5px;top:762.25px;color:#000">三</div>
<div class="t" style="left:668.5px;top:762.25px;color:#000">早班</div>
<div class="t m" style="left:848.0px;top:764.55px;color:#000">08:00</div>
<div class="t m" style="left:930.0px;top:764.55px;color:#000">16:00</div>
<div class="t m" style="left:1343.0px;top:764.55px;color:#000">480</div>
<div class="t m" style="left:1433.0px;top:764.55px;color:#000">1.000</div>
<div class="hl" style="left:27.5px;top:823px;width:1481px"></div>
<div class="hl" style="left:0;top:823px;width:27.5px;background:#e8e8e8"></div>
<div class="t m" style="left:30.0px;top:799.05px;color:#000">0001</div>
<div class="t" style="left:105.5px;top:796.75px;color:#000">张娟</div>
<div class="t" style="left:210.5px;top:796.75px;color:#000">总经办</div>
<div class="t m" style="left:300.0px;top:799.05px;color:#000">2023-09-21</div>
<div class="t m" style="left:405.0px;top:799.05px;color:#000">2022-01-24</div>
<div class="t" style="left:525.5px;top:796.75px;color:#000">科长</div>
<div class="t" style="left:615.5px;top:796.75px;color:#000">四</div>
<div class="t" style="left:668.5px;top:796.75px;color:#000">早班</div>
<div class="t m" style="left:848.0px;top:799.05px;color:#000">08:00</div>
<div class="t m" style="left:930.0px;top:799.05px;color:#000">16:00</div>
<div class="t m" style="left:1343.0px;top:799.05px;color:#000">480</div>
<div class="t m" style="left:1433.0px;top:799.05px;color:#000">1.000</div>
<div class="hl" style="left:27.5px;top:858px;width:1481px"></div>
<div class="hl" style="left:0;top:858px;width:27.5px;background:#e8e8e8"></div>
<div class="t m" style="left:30.0px;top:833.55px;color:#000">0001</div>
<div class="t" style="left:105.5px;top:831.25px;color:#000">张娟</div>
<div class="t" style="left:210.5px;top:831.25px;color:#000">总经办</div>
<div class="t m" style="left:300.0px;top:833.55px;color:#000">2023-09-22</div>
<div class="t m" style="left:405.0px;top:833.55px;color:#000">2022-01-24</div>
<div class="t" style="left:525.5px;top:831.25px;color:#000">科长</div>
<div class="t" style="left:615.5px;top:831.25px;color:#000">五</div>
<div class="t" style="left:668.5px;top:831.25px;color:#000">早班</div>
<div class="t m" style="left:848.0px;top:833.55px;color:#000">08:00</div>
<div class="t m" style="left:930.0px;top:833.55px;color:#000">16:00</div>
<div class="t m" style="left:1343.0px;top:833.55px;color:#000">480</div>
<div class="t m" style="left:1433.0px;top:833.55px;color:#000">1.000</div>
<div class="hl" style="left:27.5px;top:893px;width:1481px"></div>
<div class="hl" style="left:0;top:893px;width:27.5px;background:#e8e8e8"></div>
<div class="t m" style="left:30.0px;top:868.05px;color:#000">0001</div>
<div class="t" style="left:105.5px;top:865.75px;color:#000">张娟</div>
<div class="t" style="left:210.5px;top:865.75px;color:#000">总经办</div>
<div class="t m" style="left:300.0px;top:868.05px;color:#000">2023-09-23</div>
<div class="t m" style="left:405.0px;top:868.05px;color:#000">2022-01-24</div>
<div class="t" style="left:525.5px;top:865.75px;color:#000">科长</div>
<div class="t" style="left:615.5px;top:865.75px;color:#000">六</div>
<div class="t" style="left:668.5px;top:865.75px;color:#000">早班</div>
<div class="t m" style="left:848.0px;top:868.05px;color:#000">08:00</div>
<div class="t m" style="left:930.0px;top:868.05px;color:#000">16:00</div>
<div class="hl" style="left:27.5px;top:927px;width:1481px"></div>
<div class="hl" style="left:0;top:927px;width:27.5px;background:#e8e8e8"></div>
<div class="t m" style="left:30.0px;top:902.55px;color:#000">0001</div>
<div class="t" style="left:105.5px;top:900.25px;color:#000">张娟</div>
<div class="t" style="left:210.5px;top:900.25px;color:#000">总经办</div>
<div class="t m" style="left:300.0px;top:902.55px;color:#000">2023-09-24</div>
<div class="t m" style="left:405.0px;top:902.55px;color:#000">2022-01-24</div>
<div class="t" style="left:525.5px;top:900.25px;color:#000">科长</div>
<div class="t" style="left:615.5px;top:900.25px;color:#000">日</div>
<div class="t" style="left:668.5px;top:900.25px;color:#000">早班</div>
<div class="t m" style="left:848.0px;top:902.55px;color:#000">08:00</div>
<div class="t m" style="left:930.0px;top:902.55px;color:#000">16:00</div>
<div class="hl" style="left:27.5px;top:961px;width:1481px"></div>
<div class="hl" style="left:0;top:961px;width:27.5px;background:#e8e8e8"></div>
<div class="t m" style="left:30.0px;top:937.05px;color:#000">0001</div>
<div class="t" style="left:105.5px;top:934.75px;color:#000">张娟</div>
<div class="t" style="left:210.5px;top:934.75px;color:#000">总经办</div>
<div class="t m" style="left:300.0px;top:937.05px;color:#000">2023-09-25</div>
<div class="t m" style="left:405.0px;top:937.05px;color:#000">2022-01-24</div>
<div class="t" style="left:525.5px;top:934.75px;color:#000">科长</div>
<div class="t" style="left:615.5px;top:934.75px;color:#000">一</div>
<div class="t" style="left:668.5px;top:934.75px;color:#000">早班</div>
<div class="t m" style="left:848.0px;top:937.05px;color:#000">08:00</div>
<div class="t m" style="left:930.0px;top:937.05px;color:#000">16:00</div>
<div class="t m" style="left:1343.0px;top:937.05px;color:#000">480</div>
<div class="t m" style="left:1433.0px;top:937.05px;color:#000">1.000</div>
<div class="hl" style="left:27.5px;top:996px;width:1481px"></div>
<div class="hl" style="left:0;top:996px;width:27.5px;background:#e8e8e8"></div>
<div class="t m" style="left:30.0px;top:971.55px;color:#000">0001</div>
<div class="t" style="left:105.5px;top:969.25px;color:#000">张娟</div>
<div class="t" style="left:210.5px;top:969.25px;color:#000">总经办</div>
<div class="t m" style="left:300.0px;top:971.55px;color:#000">2023-09-26</div>
<div class="t m" style="left:405.0px;top:971.55px;color:#000">2022-01-24</div>
<div class="t" style="left:525.5px;top:969.25px;color:#000">科长</div>
<div class="t" style="left:615.5px;top:969.25px;color:#000">二</div>
<div class="t" style="left:668.5px;top:969.25px;color:#000">早班</div>
<div class="t m" style="left:848.0px;top:971.55px;color:#000">08:00</div>
<div class="t m" style="left:930.0px;top:971.55px;color:#000">16:00</div>
<div class="t m" style="left:1343.0px;top:971.55px;color:#000">480</div>
<div class="t m" style="left:1433.0px;top:971.55px;color:#000">1.000</div>
<div class="hl" style="left:27.5px;top:1031px;width:1481px"></div>
<div class="hl" style="left:0;top:1031px;width:27.5px;background:#e8e8e8"></div>
<div class="t m" style="left:30.0px;top:1006.05px;color:#000">0001</div>
<div class="t" style="left:105.5px;top:1003.75px;color:#000">张娟</div>
<div class="t" style="left:210.5px;top:1003.75px;color:#000">总经办</div>
<div class="t m" style="left:300.0px;top:1006.05px;color:#000">2023-09-27</div>
<div class="t m" style="left:405.0px;top:1006.05px;color:#000">2022-01-24</div>
<div class="t" style="left:525.5px;top:1003.75px;color:#000">科长</div>
<div class="t" style="left:615.5px;top:1003.75px;color:#000">三</div>
<div class="t" style="left:668.5px;top:1003.75px;color:#000">早班</div>
<div class="t m" style="left:848.0px;top:1006.05px;color:#000">08:00</div>
<div class="t m" style="left:930.0px;top:1006.05px;color:#000">16:00</div>
<div class="t m" style="left:1343.0px;top:1006.05px;color:#000">480</div>
<div class="t m" style="left:1433.0px;top:1006.05px;color:#000">1.000</div>
<div class="vl" style="left:27.5px;top:99px;height:1000px"></div>
<div class="vl" style="left:102.5px;top:99px;height:1000px"></div>
<div class="vl" style="left:207.5px;top:99px;height:1000px"></div>
<div class="vl" style="left:297.5px;top:99px;height:1000px"></div>
<div class="vl" style="left:402.5px;top:99px;height:1000px"></div>
<div class="vl" style="left:522.5px;top:99px;height:1000px"></div>
<div class="vl" style="left:612.5px;top:99px;height:1000px"></div>
<div class="vl" style="left:665.5px;top:99px;height:1000px"></div>
<div class="vl" style="left:785.5px;top:99px;height:1000px"></div>
<div class="vl" style="left:845.5px;top:99px;height:1000px"></div>
<div class="vl" style="left:927.5px;top:99px;height:1000px"></div>
<div class="vl" style="left:1010.5px;top:99px;height:1000px"></div>
<div class="vl" style="left:1092.5px;top:99px;height:1000px"></div>
<div class="vl" style="left:1175.5px;top:99px;height:1000px"></div>
<div class="vl" style="left:1257.5px;top:99px;height:1000px"></div>
<div class="vl" style="left:1340.5px;top:99px;height:1000px"></div>
<div class="vl" style="left:1430.5px;top:99px;height:1000px"></div>
<div class="vl" style="left:1505.5px;top:99px;height:1000px"></div>
</div>
<div style="left:1921.5px;top:143px;width:26px;height:1042px;background:#f0f0f0"></div>
<div style="left:1923px;top:167px;width:23px;height:107px;background:#cdcdcd"></div>
<svg style="position:absolute;left:1924.5px;top:145px" width="20" height="20" viewBox="-10 -10 20 20"><polyline points="-5.25,2.75 0,-2.75 5.25,2.75" fill="none" stroke="#5c5c5c" stroke-width="2.8" stroke-linejoin="miter"/></svg>
<svg style="position:absolute;left:1924.5px;top:1138px" width="20" height="20" viewBox="-10 -10 20 20"><polyline points="-5.25,-2.75 0,2.75 5.25,-2.75" fill="none" stroke="#5c5c5c" stroke-width="2.8" stroke-linejoin="miter"/></svg>
<div style="left:412.5px;top:1160px;width:1509px;height:25px;background:#f0f0f0"></div>
<div style="left:436px;top:1162px;width:1237px;height:22px;background:#cdcdcd"></div>
<svg style="position:absolute;left:413.5px;top:1162.5px" width="20" height="20" viewBox="-10 -10 20 20"><polyline points="2.75,-5.25 -2.75,0 2.75,5.25" fill="none" stroke="#5c5c5c" stroke-width="2.8" stroke-linejoin="miter"/></svg>
<svg style="position:absolute;left:1899px;top:1162.5px" width="20" height="20" viewBox="-10 -10 20 20"><polyline points="-2.75,-5.25 2.75,0 -2.75,5.25" fill="none" stroke="#5c5c5c" stroke-width="2.8" stroke-linejoin="miter"/></svg>
<div style="left:0;top:1193px;width:1954px;height:32px;background:#c4d9f4"></div>
<div style="left:42px;top:1197px;width:1.5px;height:28px;background:#9aa4b0"></div>
<div style="left:898px;top:1197px;width:1.5px;height:28px;background:#9aa4b0"></div>
<div style="left:1238px;top:1197px;width:1.5px;height:28px;background:#9aa4b0"></div>
<div style="left:1430.5px;top:1197px;width:1.5px;height:28px;background:#9aa4b0"></div>
<div style="left:1582.5px;top:1197px;width:1.5px;height:28px;background:#9aa4b0"></div>
<div style="left:1769px;top:1197px;width:1.5px;height:28px;background:#9aa4b0"></div>
<div class="t y" style="left:0px;top:1203px;color:#1a1a1a;letter-spacing:0px">6</div>
<div class="t y" style="left:907px;top:1203px;color:#1a1a1a;letter-spacing:0px">执行速度：</div>
<div class="t y" style="left:998px;top:1203px;color:#1a1a1a;letter-spacing:0.3px">0.085</div>
<div class="t y" style="left:1055px;top:1203px;color:#1a1a1a;letter-spacing:0px">秒，</div>
<div class="t y" style="left:1090.5px;top:1203px;color:#1a1a1a;letter-spacing:0px">查询记录数：</div>
<div class="t y" style="left:1198px;top:1203px;color:#1a1a1a;letter-spacing:0.5px">237</div>
<div class="t y" style="left:1248px;top:1203px;color:#1a1a1a;letter-spacing:0px">服务器：</div>
<div class="t y" style="left:1321px;top:1203px;color:#1a1a1a;letter-spacing:0.6px">.\sql2008</div>
<div class="t y" style="left:1441px;top:1203px;color:#1a1a1a;letter-spacing:0px">数据库：</div>
<div class="t y" style="left:1513.5px;top:1203px;color:#1a1a1a;letter-spacing:0px">QXT</div>
<div class="t y" style="left:1593px;top:1203px;color:#1a1a1a;letter-spacing:0px">当前用户：管理员</div>
<div class="t y" style="left:1776px;top:1203px;color:#1a1a1a;letter-spacing:0.7px">2023-09-18</div>
<div class="t y" style="left:1887px;top:1203px;color:#1a1a1a;letter-spacing:0.7px">15:00</div>
</body></html>
